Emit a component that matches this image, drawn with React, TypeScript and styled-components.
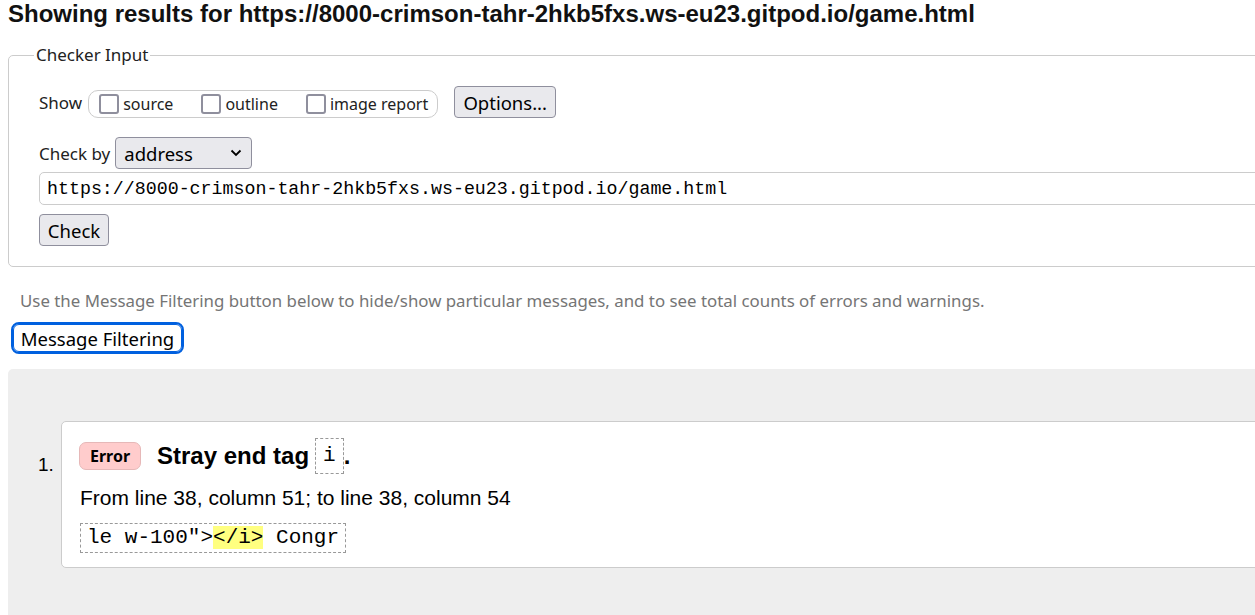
import React from "react";
import styled, { createGlobalStyle } from "styled-components";

const Global = createGlobalStyle`
  html, body { margin: 0; padding: 0; background: #fff; overflow: hidden; }
  body { width: 1255px; height: 615px; }
`;

const UI = `"Noto Sans", "Open Sans", sans-serif`;
const ARIAL = `"Liberation Sans", Arial, sans-serif`;
const MONO = `"Liberation Mono", "Courier New", monospace`;

const Page = styled.div`
  width: 1320px;
  padding: 0 0 0 8px;
  box-sizing: border-box;
  color: #000;
`;

const Title = styled.h2`
  margin: 0;
  font-family: ${ARIAL};
  font-weight: bold;
  font-size: 24px;
  line-height: 27px;
  color: #111;
`;

const Fieldset = styled.fieldset`
  margin: 17px 0 0 0;
  padding: 0 0 20px 0;
  border: 1px solid #ccc;
  border-radius: 5px;
  font-family: ${UI};
`;

const Legend = styled.legend`
  margin-left: 25px;
  padding: 0 2px;
  font-size: 17px;
  line-height: 22px;
  color: #222;
`;

const FieldBody = styled.div`
  padding-left: 30px;
`;

const Row = styled.div<{ $mt: number }>`
  display: flex;
  align-items: center;
  margin-top: ${(p) => p.$mt}px;
`;

const Label = styled.span<{ $gap: number }>`
  font-size: 17px;
  color: #222;
  margin-right: ${(p) => p.$gap}px;
`;

const Pill = styled.div`
  display: flex;
  align-items: center;
  box-sizing: border-box;
  height: 28px;
  margin-top: 4px;
  border: 1px solid #ccc;
  border-radius: 10px;
  padding: 0 9px 0 10px;
  gap: 28px;
  margin-right: 16px;
`;

const Check = styled.label`
  display: flex;
  align-items: center;
  gap: 4px;
  font-size: 16px;
  color: #222;
`;

const Box = styled.span`
  width: 16px;
  height: 16px;
  border: 2px solid #8f8f9d;
  border-radius: 3px;
  background: #fff;
  display: inline-block;
`;

const Button = styled.button<{ $w: number }>`
  height: 32px;
  width: ${(p) => p.$w}px;
  padding: 0;
  background: #e9e9ed;
  border: 1px solid #8f8f9d;
  border-radius: 4px;
  font-family: ${UI};
  font-size: 18.5px;
  color: #000;
  text-align: center;
`;

const Select = styled.div`
  box-sizing: border-box;
  height: 32px;
  width: 137px;
  background: #e9e9ed;
  border: 1px solid #8f8f9d;
  border-radius: 4px;
  display: flex;
  align-items: center;
  justify-content: space-between;
  padding: 0 9px 0 8px;
  font-size: 18.5px;
  color: #000;
`;

const Input = styled.div`
  height: 33px;
  box-sizing: border-box;
  border: 1px solid #ccc;
  border-radius: 5px;
  display: flex;
  align-items: center;
  padding-left: 7px;
  font-family: ${MONO};
  font-size: 18.3px;
  color: #000;
  margin-top: 3px;
`;

const Hint = styled.p`
  margin: 23px 0 0 12px;
  font-family: ${UI};
  font-size: 16.85px;
  line-height: 22px;
  color: #757575;
`;

const FilterButton = styled.button`
  margin: 10px 0 0 3px;
  height: 32px;
  width: 173px;
  background: #fff;
  border: 2px solid #0060df;
  border-radius: 8px;
  outline: 1px solid #0060df;
  outline-offset: -3px;
  font-family: ${UI};
  font-size: 18.5px;
  color: #000;
  padding: 0;
`;

const Results = styled.ol`
  margin: 15px 0 0 0;
  padding: 52px 0 48px 53px;
  background: #eee;
  border-radius: 5px 0 0 0;
  list-style: none;
`;

const Item = styled.li`
  display: flex;
  align-items: flex-start;
`;

const Num = styled.span`
  font-family: ${ARIAL};
  font-size: 19px;
  margin: 33px 0 0 -23px;
  width: 23px;
`;

const Card = styled.div`
  flex: 1;
  background: #fff;
  border: 1px solid #ccc;
  border-radius: 5px;
  padding: 16px 0 14px 17px;
`;

const Head = styled.div`
  display: flex;
  align-items: center;
`;

const Badge = styled.span`
  box-sizing: border-box;
  height: 28px;
  width: 62px;
  background: #fcc;
  border: 1px solid #e6b8b8;
  border-radius: 7px;
  display: flex;
  align-items: center;
  justify-content: center;
  font-family: ${UI};
  font-weight: bold;
  font-size: 16px;
  margin-right: 16px;
`;

const HeadText = styled.span`
  font-family: ${ARIAL};
  font-weight: bold;
  font-size: 24px;
  display: flex;
  align-items: center;
`;

const CodeBox = styled.code`
  font-family: ${MONO};
  font-weight: normal;
  font-size: 21px;
  border: 1px dashed #999;
  padding: 3px 7px 4px;
  margin-left: 6px;
  line-height: 27px;
`;

const Location = styled.p`
  margin: 12px 0 0 1px;
  font-family: ${ARIAL};
  font-size: 21px;
  line-height: 24px;
`;

const Extract = styled.div`
  display: inline-block;
  margin: 13px 0 0 1px;
  border: 1px dashed #999;
  padding: 2px 6px;
  font-family: ${MONO};
  font-size: 21px;
  line-height: 24px;
  white-space: pre;
`;

const Mark = styled.mark`
  background: #ffff80;
  color: inherit;
`;

const Chevron = () => (
  <svg width="12" height="8" viewBox="0 0 12 8">
    <path d="M1.5 1.5 L6 6 L10.5 1.5" fill="none" stroke="#000" strokeWidth="1.8" />
  </svg>
);

const url = "https://8000-crimson-tahr-2hkb5fxs.ws-eu23.gitpod.io/game.html";

export default function App() {
  return (
    <>
      <Global />
      <Page>
        <Title>Showing results for {url}</Title>
        <Fieldset>
          <Legend>Checker Input</Legend>
          <FieldBody>
            <Row $mt={20}>
              <Label $gap={6}>Show</Label>
              <Pill>
                <Check><Box />source</Check>
                <Check><Box />outline</Check>
                <Check><Box />image report</Check>
              </Pill>
              <Button $w={102}>Options...</Button>
            </Row>
            <Row $mt={19}>
              <Label $gap={5}>Check by</Label>
              <Select>
                <span>address</span>
                <Chevron />
              </Select>
            </Row>
            <Input>{url}</Input>
            <Row $mt={9}>
              <Button $w={70}>Check</Button>
            </Row>
          </FieldBody>
        </Fieldset>
        <Hint>
          Use the Message Filtering button below to hide/show particular messages, and to see total counts of errors and warnings.
        </Hint>
        <FilterButton>Message Filtering</FilterButton>
        <Results>
          <Item>
            <Num>1.</Num>
            <Card>
              <Head>
                <Badge>Error</Badge>
                <HeadText>
                  Stray end tag<CodeBox>i</CodeBox>.
                </HeadText>
              </Head>
              <Location>From line 38, column 51; to line 38, column 54</Location>
              <Extract>
                {'le w-100">'}
                <Mark>{"</i>"}</Mark>
                {" Congr"}
              </Extract>
            </Card>
          </Item>
        </Results>
      </Page>
    </>
  );
}
